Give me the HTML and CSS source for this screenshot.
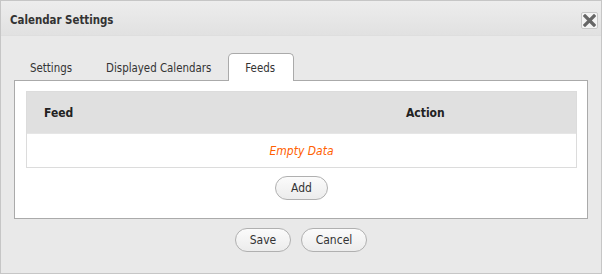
FILE: index.html
```html
<!DOCTYPE html>
<html>
<head>
<meta charset="utf-8">
<link rel="stylesheet" href="styles.css">
</head>
<body>
<div class="dialog">
  <div class="titlebar">
    <span class="title">Calendar Settings</span>
    <span class="close">
      <svg width="13" height="13" viewBox="0 0 13 13"><path d="M2 2 L11 11 M11 2 L2 11" stroke="#666" stroke-width="3.2" stroke-linecap="square"/></svg>
    </span>
  </div>
  <div class="body">
    <div class="tabs">
      <div class="tab first">Settings</div>
      <div class="tab">Displayed Calendars</div>
      <div class="tab active">Feeds</div>
    </div>
    <div class="panel">
      <div class="grid">
        <div class="head">
          <div class="cell">Feed</div>
          <div class="cell">Action</div>
        </div>
        <div class="row">
          <span class="empty">Empty Data</span>
        </div>
      </div>
      <div class="addwrap"><button class="btn add">Add</button></div>
    </div>
    <div class="footer">
      <button class="btn save">Save</button>
      <button class="btn cancel">Cancel</button>
    </div>
  </div>
</div>
</body>
</html>
```
FILE: styles.css
```css
html, body {
  margin: 0;
  padding: 0;
  background: #e9e9e9;
}
body {
  font-family: "DejaVu Sans Condensed", "DejaVu Sans", sans-serif;
  font-size: 11.4px;
  color: #333;
}
.dialog {
  width: 602px;
  height: 274px;
  box-sizing: border-box;
  border: 1px solid #c6c6c6;
  background: #e9e9e9;
  display: flex;
  flex-direction: column;
}
.titlebar {
  height: 35px;
  box-sizing: border-box;
  background: linear-gradient(#ededed, #e1e1e1);
  border-bottom: 1px solid #dedede;
  display: flex;
  align-items: center;
  padding-left: 9px;
  padding-right: 3px;
}
.title {
  font-weight: bold;
  color: #333;
  font-size: 11.4px;
  padding-top: 3px;
}
.close {
  margin-left: auto;
  width: 17px;
  height: 17px;
  box-sizing: border-box;
  border: 1px solid #c8c8c8;
  border-radius: 2px;
  background: #f4f4f4;
  display: flex;
  align-items: center;
  justify-content: center;
  margin-top: 4px;
}
.body {
  padding: 18px 13px 0 13px;
  display: flex;
  flex-direction: column;
}
.tabs {
  display: flex;
  height: 27px;
  margin-bottom: -1px;
  position: relative;
  z-index: 1;
}
.tab {
  box-sizing: border-box;
  height: 27px;
  padding: 0 16px;
  border: 1px solid transparent;
  border-bottom: none;
  display: flex;
  align-items: center;
  color: #333;
}
.tab.first {
  padding-left: 15px;
}
.tab.active {
  background: #fff;
  border-color: #aaa;
  border-radius: 5px 5px 0 0;
  height: 28px;
  margin-top: -1px;
  padding-right: 18px;
}
.panel {
  height: 139px;
  box-sizing: border-box;
  border: 1px solid #aaa;
  background: #fff;
  padding: 10px 10px 0 11px;
}
.grid {
  border: 1px solid #dcdcdc;
}
.head {
  display: grid;
  grid-template-columns: 362px 1fr;
  height: 41px;
  background: #e0e0e0;
  align-items: center;
  font-weight: bold;
  font-size: 12px;
  color: #222;
}
.head .cell {
  padding-left: 17px;
}
.row {
  height: 33px;
  display: flex;
  align-items: center;
  justify-content: center;
  border-top: 1px solid #e6e6e6;
}
.empty {
  color: #ff6000;
  font-style: italic;
  font-size: 12px;
}
.addwrap {
  display: flex;
  justify-content: center;
  margin-top: 8px;
}
.btn {
  font-family: inherit;
  font-size: 12px;
  color: #333;
  height: 24px;
  box-sizing: border-box;
  border: 1px solid #b0b0b0;
  border-radius: 12px;
  background: linear-gradient(#fbfbfb, #ececec);
  padding: 0;
}
.add { width: 53px; }
.footer {
  display: flex;
  justify-content: center;
  gap: 10px;
  margin-top: 9px;
}
.save { width: 56px; }
.cancel { width: 66px; }
```
